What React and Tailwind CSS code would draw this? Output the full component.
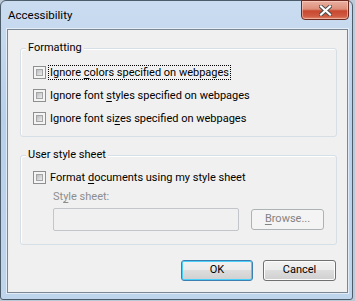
function Checkbox() {
  return (
    <div className="w-[13px] h-[13px] shrink-0 border border-[#8e8f8f] bg-[#f4f4f4] p-[2px]">
      <div className="w-full h-full border border-[#a3a5a7] bg-[linear-gradient(135deg,#bdbdbd,#ececec)]" />
    </div>
  );
}

function CheckRow({ pre, u, post, focused }) {
  return (
    <div className="h-[23px] flex items-center">
      <Checkbox />
      <span
        className={
          'ml-[2px] px-[1px] leading-[13px] border border-dotted ' +
          (focused ? 'border-black' : 'border-transparent')
        }
      >
        {pre}
        <span className="underline underline-offset-[2px]">{u}</span>
        {post}
      </span>
    </div>
  );
}

function Group({ title, children, className }) {
  return (
    <div className={'relative ml-[12px] w-[317px] rounded-[3px] border border-[#d5dfe5] shadow-[inset_1px_1px_0_#fff] ' + className}>
      <span className="absolute -top-[9px] left-[5px] bg-[#f0f0f0] px-[2px] leading-[16px]">{title}</span>
      {children}
    </div>
  );
}

function Button({ children, isDefault, disabled, className }) {
  let look =
    'border-[#707070] text-black bg-[linear-gradient(#f2f2f2_0%,#ebebeb_50%,#dddddd_50%,#cfcfcf_100%)] shadow-[inset_0_0_0_1px_#fcfcfc]';
  if (isDefault)
    look =
      'border-[#3c7fb1] text-black bg-[linear-gradient(#f2f2f2_0%,#ebebeb_50%,#dddddd_50%,#cfcfcf_100%)] shadow-[inset_0_0_0_1px_#48d0fa]';
  if (disabled) look = 'border-[#adb2b5] text-[#838383] bg-[#f4f4f4]';
  return (
    <div className={'h-[21px] rounded-[3px] border flex items-center justify-center ' + look + ' ' + className}>
      {children}
    </div>
  );
}

export default function App() {
  return (
    <div className="w-[355px] h-[301px] bg-[#bcc9d6] font-['Roboto',sans-serif] text-[11px] text-black">
      <div className="w-[353px] h-[300px] rounded-t-[6px] rounded-b-[3px] border border-[#4d5c6b] bg-[linear-gradient(#cadcf0,#b8d0ea_40%,#bfd5ec)] flex flex-col">
        {/* title bar */}
        <div className="h-[28px] flex items-start justify-between">
          <span className="mt-[6px] ml-[7px] text-[11.5px] leading-[16px]">Accessibility</span>
          <div className="mr-[3px] -mt-[1px] w-[48px] h-[20px] rounded-b-[4px] border border-[#6e2a1f] bg-[linear-gradient(#eab0a1_0%,#dd8f7b_45%,#c8472f_55%,#cf5c43_85%,#e08a70_100%)] shadow-[inset_0_0_0_1px_rgba(255,220,210,0.5)] flex items-center justify-center">
            <svg width="13" height="11" viewBox="0 0 13 11">
              <path d="M2 1.5 L11 9.5 M11 1.5 L2 9.5" stroke="#4a4a4a" strokeWidth="4" strokeLinecap="square" />
              <path d="M2 1.5 L11 9.5 M11 1.5 L2 9.5" stroke="#fff" strokeWidth="2.2" strokeLinecap="square" />
            </svg>
          </div>
        </div>
        {/* client area */}
        <div className="ml-[6px] w-[341px] h-[264px] border border-[#7b8794] shadow-[0_0_0_1px_rgba(255,255,255,0.55)] bg-[#f0f0f0] pt-[18px]">
          <Group title="Formatting" className="pt-[12px] pl-[12px] pb-[6px]">
            <CheckRow pre="Ignore " u="c" post="olors specified on webpages" focused />
            <CheckRow pre="Ignore font " u="s" post="tyles specified on webpages" />
            <CheckRow pre="Ignore font si" u="z" post="es specified on webpages" />
          </Group>
          <Group title="User style sheet" className="mt-[18px] pt-[10px] pl-[12px] pb-[13px]">
            <CheckRow pre="Format " u="d" post="ocuments using my style sheet" />
            <div className="ml-[20px] h-[15px] leading-[15px] text-[#8d8d8d]">
              St<span className="underline underline-offset-[2px]">y</span>le sheet:
            </div>
            <div className="ml-[20px] mt-[4px] flex items-center">
              <div className="w-[186px] h-[23px] rounded-[2px] border border-[#c2c6ca] bg-[#f0f0f0]" />
              <Button disabled className="ml-[12px] w-[73px]">
                <span className="underline underline-offset-[2px]">B</span>rowse...
              </Button>
            </div>
          </Group>
          <div className="mt-[15px] mr-[11px] flex justify-end gap-[10px]">
            <Button isDefault className="w-[72px]">OK</Button>
            <Button className="w-[73px]">Cancel</Button>
          </div>
        </div>
      </div>
    </div>
  );
}
